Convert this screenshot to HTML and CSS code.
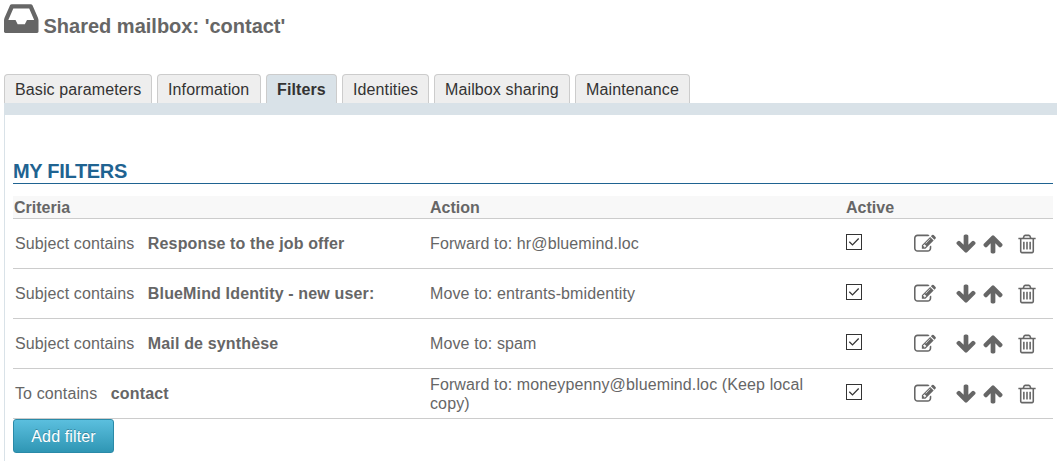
FILE: index.html
```html
<!DOCTYPE html>
<html lang="en">
<head>
<meta charset="utf-8">
<title>Shared mailbox</title>
<link rel="stylesheet" href="styles.css">
</head>
<body>
<svg class="sprite" width="0" height="0" aria-hidden="true">
  <symbol id="edit" viewBox="0 0 1792 1792"><path d="M888 1184l116-116-152-152-116 116v56h96v96h56zm440-720q-16-16-33 1l-350 350q-17 17-1 33t33-1l350-350q17-17 1-33zm80 594v190q0 119-84.5 203.5t-203.5 84.5h-832q-119 0-203.5-84.5t-84.5-203.5v-832q0-119 84.5-203.5t203.5-84.5h832q63 0 117 25 15 7 18 23 3 17-9 29l-49 49q-14 14-32 8-23-6-45-6h-832q-66 0-113 47t-47 113v832q0 66 47 113t113 47h832q66 0 113-47t47-113v-126q0-13 9-22l64-64q15-15 35-7t20 29zm-96-738l288 288-672 672h-288v-288zm444 132l-92 92-288-288 92-92q28-28 68-28t68 28l152 152q28 28 28 68t-28 68z"/></symbol>
  <symbol id="down" viewBox="0 0 1792 1792"><path d="M1675 832q0 53-37 90l-651 652q-39 37-91 37-53 0-90-37l-651-652q-38-36-38-90 0-53 38-91l74-75q39-37 91-37 53 0 90 37l294 294v-704q0-52 38-90t90-38h128q52 0 90 38t38 90v704l294-294q37-37 90-37 52 0 91 37l75 75q37 39 37 91z"/></symbol>
  <symbol id="up" viewBox="0 0 1792 1792"><path d="M1675 971q0 51-37 90l-75 75q-38 38-91 38-54 0-90-38l-294-293v704q0 52-37.5 84.5t-90.5 32.5h-128q-53 0-90.5-32.5t-37.5-84.5v-704l-294 293q-36 38-90 38t-90-38l-75-75q-38-38-38-90 0-53 38-91l651-651q35-37 90-37 54 0 91 37l651 651q37 39 37 91z"/></symbol>
  <symbol id="trash" viewBox="0 0 1792 1792"><path d="M704 736v576q0 14-9 23t-23 9h-64q-14 0-23-9t-9-23v-576q0-14 9-23t23-9h64q14 0 23 9t9 23zm256 0v576q0 14-9 23t-23 9h-64q-14 0-23-9t-9-23v-576q0-14 9-23t23-9h64q14 0 23 9t9 23zm256 0v576q0 14-9 23t-23 9h-64q-14 0-23-9t-9-23v-576q0-14 9-23t23-9h64q14 0 23 9t9 23zm128 724v-948h-896v948q0 22 7 40.5t14.5 27 10.5 8.5h832q3 0 10.5-8.5t14.5-27 7-40.5zm-672-1076h448l-48-117q-7-9-17-11h-317q-10 2-17 11zm928 32v64q0 14-9 23t-23 9h-96v948q0 83-47 143.5t-113 60.5h-832q-66 0-113-58.5t-47-141.5v-952h-96q-14 0-23-9t-9-23v-64q0-14 9-23t23-9h309l70-167q15-37 54-63t79-26h320q40 0 79 26t54 63l70 167h309q14 0 23 9t9 23z"/></symbol>
  <symbol id="check" viewBox="0 0 14 14"><path d="M2.3 6.7l3.2 3.2 6.2-6.4" fill="none" stroke="#333" stroke-width="1.3"/></symbol>
</svg>

<header class="title">
  <svg class="title-icon" viewBox="128 256 1536 1280"><path d="M1151 960h316q-1-3-2.5-8.5t-2.5-7.5l-212-496h-708l-212 496q-1 3-2.5 8.5t-2.5 7.5h316l95 192h320zm513 30v482q0 26-19 45t-45 19h-1408q-26 0-45-19t-19-45v-482q0-62 25-123l238-552q10-25 36.5-42t52.5-17h832q26 0 52.5 17t36.5 42l238 552q25 61 25 123z"/></svg>
  <h1 class="title-text">Shared mailbox: 'contact'</h1>
</header>

<nav class="tabs">
  <a class="tab">Basic parameters</a>
  <a class="tab">Information</a>
  <a class="tab tab-active">Filters</a>
  <a class="tab">Identities</a>
  <a class="tab">Mailbox sharing</a>
  <a class="tab">Maintenance</a>
</nav>

<main class="panel">
  <h2 class="section-title">MY FILTERS</h2>
  <div class="table">
    <div class="row head"><span>Criteria</span><span>Action</span><span>Active</span></div>
    <div class="row">
      <div class="criteria"><span>Subject contains</span><b>Response to the job offer</b></div>
      <div class="action">Forward to: hr@bluemind.loc</div>
      <div class="checkbox"><svg><use href="#check"/></svg></div>
      <div class="icons"><svg class="edit"><use href="#edit"/></svg><svg class="down"><use href="#down"/></svg><svg class="up"><use href="#up"/></svg><svg><use href="#trash"/></svg></div>
    </div>
    <div class="row">
      <div class="criteria"><span>Subject contains</span><b>BlueMind Identity - new user:</b></div>
      <div class="action">Move to: entrants-bmidentity</div>
      <div class="checkbox"><svg><use href="#check"/></svg></div>
      <div class="icons"><svg class="edit"><use href="#edit"/></svg><svg class="down"><use href="#down"/></svg><svg class="up"><use href="#up"/></svg><svg><use href="#trash"/></svg></div>
    </div>
    <div class="row">
      <div class="criteria"><span>Subject contains</span><b>Mail de synthèse</b></div>
      <div class="action">Move to: spam</div>
      <div class="checkbox"><svg><use href="#check"/></svg></div>
      <div class="icons"><svg class="edit"><use href="#edit"/></svg><svg class="down"><use href="#down"/></svg><svg class="up"><use href="#up"/></svg><svg><use href="#trash"/></svg></div>
    </div>
    <div class="row">
      <div class="criteria"><span>To contains</span><b>contact</b></div>
      <div class="action">Forward to: moneypenny@bluemind.loc (Keep local copy)</div>
      <div class="checkbox"><svg><use href="#check"/></svg></div>
      <div class="icons"><svg class="edit"><use href="#edit"/></svg><svg class="down"><use href="#down"/></svg><svg class="up"><use href="#up"/></svg><svg><use href="#trash"/></svg></div>
    </div>
  </div>
  <button class="add">Add filter</button>
</main>
</body>
</html>
```
FILE: styles.css
```css
* { box-sizing: border-box; }
body {
  margin: 0;
  height: 462px;
  overflow: hidden;
  display: flex;
  flex-direction: column;
  background: #fff;
  color: #666;
  font: 16px/19px "Liberation Sans", Arial, sans-serif;
}
svg { display: block; fill: #666; }
.sprite { position: absolute; }
.title { display: flex; height: 74px; padding: 4px 0 0 4px; gap: 5px; }
.title-icon { width: 34.5px; height: 29px; }
.title-text { margin: 10px 0 0; font-size: 20px; line-height: 24px; }
.tabs {
  display: grid;
  grid-template-columns: 148px 104px 71px 87px 136px 115px;
  gap: 5px;
  height: 41px;
  margin-left: 4px;
  border-bottom: 12px solid #d9e2e8;
}
.tab {
  padding: 5px 0 0 10px;
  border: 1px solid #ccc;
  border-bottom: 0;
  border-radius: 4px 4px 0 0;
  background: #eee;
  color: #333;
  letter-spacing: .12px;
  white-space: nowrap;
}
.tab-active { background: #d9e2e8; font-weight: bold; }
.panel {
  height: 346px;
  margin-left: 4px;
  padding: 44px 4px 0 8px;
  border-left: 1px solid #d9e2e8;
}
.section-title {
  height: 25px;
  margin: 0 0 12px;
  border-bottom: 1px solid #1f6391;
  color: #1f6391;
  font-size: 20px;
  line-height: 24px;
  letter-spacing: -.3px;
}
.row {
  display: grid;
  grid-template-columns: 416px 416px 69px 1fr;
  align-items: center;
  height: 50px;
  border-bottom: 1px solid #ccc;
}
.head {
  height: 23px;
  padding-left: 1px;
  background: #f8f8f8;
  font-weight: bold;
}
.criteria { display: flex; gap: 13.5px; padding-left: 2px; letter-spacing: .12px; }
.criteria b { letter-spacing: .15px; }
.action { padding: 0 20px 0 1px; letter-spacing: .12px; }
.checkbox {
  width: 16px;
  height: 16px;
  margin: 0 0 3px 1px;
  border: 1px solid #333;
}
.checkbox svg { width: 14px; height: 14px; }
.icons { display: flex; }
.icons svg { width: 22px; height: 22px; }
.edit { margin-right: 19px; }
.down { margin-right: 5px; }
.up { margin-right: 12px; }
.add {
  display: block;
  width: 101px;
  height: 34px;
  padding: 0;
  border: 1px solid #2a8aa8;
  border-radius: 3px;
  background: linear-gradient(#5bbfde, #2f96b4);
  color: #fff;
  font: inherit;
  letter-spacing: .12px;
  text-shadow: 0 -1px 0 rgba(0, 0, 0, .25);
}
```
